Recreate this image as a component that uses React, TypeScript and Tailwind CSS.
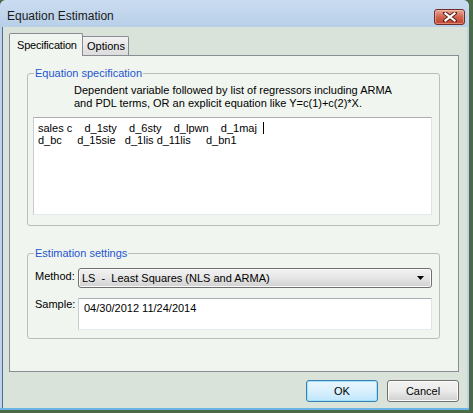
const CloseButton = () => (
  <div className="w-[31px] h-[16px] mt-[9px] rounded-[3px] border border-[#6b2f27] bg-gradient-to-b from-[#e8a798] via-[#cf6450] to-[#c2432c] flex items-center justify-center shadow-[inset_0_0_0_1px_rgba(255,210,200,0.45)]">
    <svg width="14" height="10" viewBox="0 0 14 10">
      <path d="M2 1 L12 9 M12 1 L2 9" stroke="#5a2018" strokeWidth="4" strokeLinecap="square" />
      <path d="M2.5 1.5 L11.5 8.5 M11.5 1.5 L2.5 8.5" stroke="#ffffff" strokeWidth="2.2" strokeLinecap="square" />
    </svg>
  </div>
);

const GroupBox = ({ title, className, children }: { title: string; className: string; children: React.ReactNode }) => (
  <div className={"relative rounded-[3px] border border-[#b9beb9] " + className}>
    <span className="absolute -top-[7px] left-[6px] px-[1px] bg-[#f0f5ef] text-[#1f56cf] leading-[13px]">
      {title}
    </span>
    {children}
  </div>
);

const TextBox = ({ className, children }: { className: string; children: React.ReactNode }) => (
  <div className={"bg-white border border-t-[#abadb3] border-l-[#c9ccd2] border-r-[#dfe3ea] border-b-[#e3e9ef] " + className}>
    {children}
  </div>
);

const Button = ({ label, primary }: { label: string; primary?: boolean }) => (
  <div
    className={
      "w-[72px] h-[22px] rounded-[3px] border flex items-center justify-center " +
      (primary
        ? "border-[#3c7fb1] bg-gradient-to-b from-[#eaf6fd] via-[#d9f0fc] to-[#bee6fd] shadow-[inset_0_0_0_1px_#9ee3fb]"
        : "border-[#707070] bg-gradient-to-b from-[#f2f2f2] via-[#ebebeb] to-[#cfcfcf] shadow-[inset_0_0_0_1px_#fbfbfb]")
    }
  >
    {label}
  </div>
);

export default function App() {
  return (
    <div className="w-[473px] h-[413px] bg-[#4b6a48] overflow-hidden font-['Liberation_Sans',Arial,sans-serif] text-[11px] text-black">
      <div className="w-[469px] h-[410px] flex flex-col rounded-t-[6px] bg-[#bcd3ea] border-b-2 border-[#6cb4e6]">
        {/* title bar */}
        <div className="h-[27px] flex justify-between pl-[7px] pr-[4px] rounded-t-[6px] bg-gradient-to-b from-[#cadcf0] to-[#b8cfe9]">
          <span className="mt-[9px] text-[12px] leading-[14px] text-[#1a1a1a]">Equation Estimation</span>
          <CloseButton />
        </div>

        {/* client area */}
        <div className="flex-1 ml-[2px] mr-[2px] border-l border-[#4f6d92] bg-[#d9e3d9] flex flex-col pl-[6px] pr-[8px] pt-[6px]">
          <div className="flex items-end h-[22px]">
            <div className="relative z-10 -mb-px w-[74px] h-[23px] border border-b-0 border-[#898c95] bg-[#f0f5ef] rounded-t-[2px] pl-[7px] pt-[5px] leading-[13px] tracking-[-0.2px]">
              Specification
            </div>
            <div className="w-[46px] h-[19px] border border-b-0 border-l-0 border-[#898c95] bg-gradient-to-b from-[#f2f2f2] to-[#dcdcdc] rounded-tr-[2px] pl-[4px] pt-[3px] leading-[13px]">
              Options
            </div>
          </div>

          <div className="h-[317px] border border-[#898c95] bg-[#f0f5ef] pl-[17px] pt-[17px]">
            <GroupBox title="Equation specification" className="w-[413px] h-[153px]">
              <div className="pl-[46px] pt-[10px] leading-[13px]">
                <div>Dependent variable followed by list of regressors including ARMA</div>
                <div>and PDL terms, OR an explicit equation like Y=c(1)+c(2)*X.</div>
              </div>
              <TextBox className="ml-[5px] mt-[7px] w-[399px] h-[98px] pl-[4px] pt-[4px] leading-[12px] whitespace-pre">
                <div>
                  {"sales c    d_1sty    d_6sty    d_lpwn    d_1maj  "}
                  <span className="inline-block w-px h-[12px] bg-black align-[-2px]" />
                </div>
                <div>{"d_bc     d_15sie   d_1lis d_11lis     d_bn1"}</div>
              </TextBox>
            </GroupBox>

            <GroupBox title="Estimation settings" className="w-[413px] h-[86px] mt-[27px] pl-[7px] pt-[14px]">
              <div className="flex">
                <span className="w-[43px] leading-[13px] pt-[2px]">Method:</span>
                <div className="w-[354px] h-[20px] rounded-[3px] border border-[#707070] bg-gradient-to-b from-[#f2f2f2] via-[#e6e6e6] to-[#d0d0d0] flex items-center justify-between pl-[3px] pr-[7px] shadow-[inset_0_0_0_1px_#fafafa]">
                  <span className="whitespace-pre pt-[1px]">{"LS  -  Least Squares (NLS and ARMA)"}</span>
                  <svg width="7" height="4" viewBox="0 0 7 4">
                    <path d="M0 0 H7 L3.5 4 Z" fill="#000" />
                  </svg>
                </div>
              </div>
              <div className="flex mt-[10px]">
                <span className="w-[43px] leading-[13px]">Sample:</span>
                <TextBox className="w-[354px] h-[32px] pl-[5px] pt-[3px] leading-[13px]">
                  04/30/2012 11/24/2014
                </TextBox>
              </div>
            </GroupBox>
          </div>

          <div className="flex justify-end gap-[9px] mt-[8px]">
            <Button label="OK" primary />
            <Button label="Cancel" />
          </div>
        </div>
      </div>
    </div>
  );
}
